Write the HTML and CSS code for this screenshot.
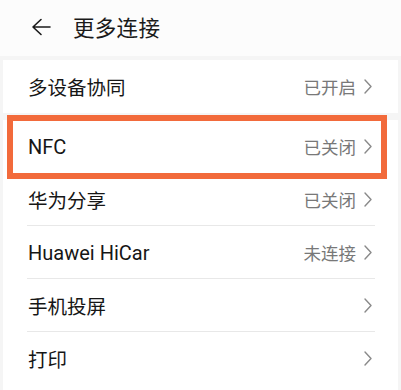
FILE: index.html
```html
<!DOCTYPE html>
<html lang="zh-CN">
<head>
<meta charset="utf-8">
<link rel="stylesheet" href="styles.css">
</head>
<body>
<div class="page">
  <header class="header">
    <svg class="back" width="20" height="18" viewBox="0 0 20 18"><path d="M10 1.5 L2 9 L10 16.5 M2 9 H19" fill="none" stroke="#1a1a1a" stroke-width="1.6" stroke-linecap="round" stroke-linejoin="round"/></svg>
    <h1 class="title">更多连接</h1>
  </header>
  <section class="card card-top">
    <div class="row">
      <span class="label">多设备协同</span>
      <span class="value">已开启<svg class="chev" width="8" height="15" viewBox="0 0 8 15"><path d="M1 1 L7 7.5 L1 14" fill="none" stroke="#8a8a8a" stroke-width="1.4" stroke-linecap="round" stroke-linejoin="round"/></svg></span>
    </div>
  </section>
  <section class="card card-main">
    <div class="row highlight">
      <span class="label latin">NFC</span>
      <span class="value">已关闭<svg class="chev" width="8" height="15" viewBox="0 0 8 15"><path d="M1 1 L7 7.5 L1 14" fill="none" stroke="#8a8a8a" stroke-width="1.4" stroke-linecap="round" stroke-linejoin="round"/></svg></span>
    </div>
    <div class="row divided">
      <span class="label">华为分享</span>
      <span class="value">已关闭<svg class="chev" width="8" height="15" viewBox="0 0 8 15"><path d="M1 1 L7 7.5 L1 14" fill="none" stroke="#8a8a8a" stroke-width="1.4" stroke-linecap="round" stroke-linejoin="round"/></svg></span>
    </div>
    <div class="row divided">
      <span class="label latin">Huawei HiCar</span>
      <span class="value">未连接<svg class="chev" width="8" height="15" viewBox="0 0 8 15"><path d="M1 1 L7 7.5 L1 14" fill="none" stroke="#8a8a8a" stroke-width="1.4" stroke-linecap="round" stroke-linejoin="round"/></svg></span>
    </div>
    <div class="row divided">
      <span class="label">手机投屏</span>
      <span class="value"><svg class="chev" width="8" height="15" viewBox="0 0 8 15"><path d="M1 1 L7 7.5 L1 14" fill="none" stroke="#8a8a8a" stroke-width="1.4" stroke-linecap="round" stroke-linejoin="round"/></svg></span>
    </div>
    <div class="row">
      <span class="label">打印</span>
      <span class="value"><svg class="chev" width="8" height="15" viewBox="0 0 8 15"><path d="M1 1 L7 7.5 L1 14" fill="none" stroke="#8a8a8a" stroke-width="1.4" stroke-linecap="round" stroke-linejoin="round"/></svg></span>
    </div>
  </section>
</div>
</body>
</html>
```
FILE: styles.css
```css
* { box-sizing: border-box; margin: 0; padding: 0; }
html, body { width: 401px; height: 390px; overflow: hidden; }
body {
  background: #f5f5f5;
  font-family: "Noto Sans CJK SC", "Noto Sans", sans-serif;
  color: #1a1a1a;
}
.page { display: flex; flex-direction: column; }
.header {
  height: 56px;
  display: flex;
  align-items: center;
  padding-left: 31px;
  gap: 22px;
  background: #fcfcfc;
  margin-bottom: 4px;
}
.back { display: block; margin-top: -2px; }
.title {
  font-size: 21.5px;
  font-weight: 400;
  letter-spacing: 0.3px;
  margin-top: -4px;
}
.card {
  background: #fff;
  margin: 0 3px;
}
.card-top { margin-bottom: 7px; }
.row {
  position: relative;
  height: 53px;
  display: flex;
  align-items: center;
  justify-content: space-between;
  padding: 0 26px 0 25px;
}
.row.divided::before {
  content: "";
  position: absolute;
  left: 24px;
  right: 23px;
  bottom: 0;
  height: 1px;
  background: #e8e8e8;
}
.label { font-size: 19.5px; color: #161616; }
.label.latin { font-family: "Roboto", "Noto Sans", sans-serif; font-size: 20px; }
.value {
  display: flex;
  align-items: center;
  font-size: 17.5px;
  color: #787878;
}
.chev {
  display: block;
  margin-left: 8px;
}
.highlight::after {
  content: "";
  position: absolute;
  left: 4px;
  right: 11px;
  top: -5px;
  bottom: -6px;
  border: 6.5px solid #f26a3b;
  pointer-events: none;
}
.card-main { height: 270px; }
```
